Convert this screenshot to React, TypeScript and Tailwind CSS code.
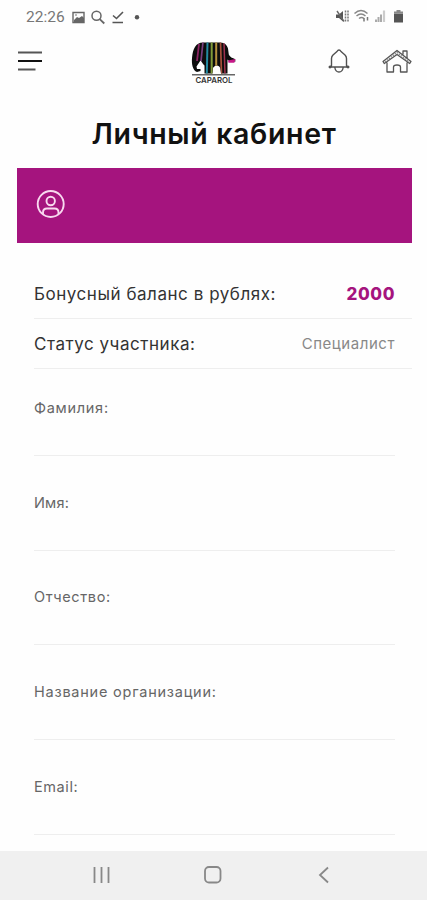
import React from "react";

const fields = [
  { label: "Фамилия:", box: "h-[87px]", text: "tracking-[0.72px]" },
  { label: "Имя:", box: "h-[95px]", text: "tracking-[0.2px]" },
  { label: "Отчество:", box: "h-[94px]", text: "tracking-[0.65px]" },
  { label: "Название организации:", box: "h-[95px]", text: "tracking-[0.77px]" },
  { label: "Email:", box: "h-[95px]", text: "tracking-[0.6px]" },
];

function StatusBar() {
  return (
    <div className="flex h-[34px] shrink-0 items-center justify-between pl-[26px] pr-[22px]">
      <div className="flex items-center">
        <span className="w-[46px] whitespace-nowrap font-[Roboto] text-[15.5px] leading-[18px] text-[#777]">22:26</span>
        <svg width="68" height="16" viewBox="0 0 68 16" fill="none">
          <path d="M1 3.500h11v10H1z" stroke="#666" strokeWidth="1.400" />
          <path d="M2 11l3-3 2 1 3-2 2 2v4H2z" fill="#666" />
          <path d="M3 6h2" stroke="#777" />
          <circle cx="24.500" cy="6.800" r="4.500" stroke="#666" strokeWidth="1.500" />
          <path d="M27.700 10.200l4.600 4.300" stroke="#666" strokeWidth="1.800" />
          <path d="M41 6.500l3.500 3L51 3M40.500 13.500H51" stroke="#555" strokeWidth="1.600" />
          <circle cx="65" cy="8.200" r="2.200" fill="#555" />
        </svg>
      </div>
      <svg width="70" height="16" viewBox="335 9 70 16" fill="none">
        <path d="M336 14.500h3l4-3.500v10.500l-4-3.500h-3z" fill="#555" />
        <path d="M337 11l7 10.500" stroke="#666" strokeWidth="1.400" />
        <path d="M345.500 10.500v12M348 10.500v12" stroke="#777" strokeWidth="1.500" strokeDasharray="2 1" />
        <path d="M354.500 13.500q6.500-6 13 0M356.500 16q4.500-4 9 0M359 18.500q2.500-2 5 0" stroke="#888" strokeWidth="1.500" />
        <path d="M364 18v3.500m3.500-4.500v3.500" stroke="#777" strokeWidth="1.500" />
        <path d="M376 22v-2.500m2.500 2.500v-5m2.500 5v-7.500" stroke="#aaa" strokeWidth="2" />
        <path d="M384 22V10.500" stroke="#ccc" strokeWidth="2.200" />
        <path d="M394 13.500h9v9h-9z" fill="#555" />
        <path d="M394 13.500v-2h2.500v-1.500h4v1.500h2.500v2z" fill="#888" />
      </svg>
    </div>
  );
}

function Logo() {
  return (
    <svg width="46" height="44" viewBox="191 41 46 44">
      <defs>
        <clipPath id="elephant">
          <path d="M203 42.500h17c5 .3 7 2.500 8 6l.8 6c2 3.500 4 3.500 6.200 4.500l.5 2.500h-4c-2 0-3-1-4-2V73.500h-6.500l-.8-5.500c-1-3.500-5.500-3.500-7.200 0l-.5 5.500H204.500v-8c-1.500-1-2.500-3.500-4-5l-4 6 .5 2.500h3.500v2l-3.500 1c-4.500-1.500-5.500-8.500-5-14 .8-9 3.500-15.500 11-15.500z" />
        </clipPath>
      </defs>
      <g clipPath="url(#elephant)">
        <path fill="#0d0d0d" d="M191 41h46v34h-46z" />
        <path d="M199 44l-2 17" stroke="#8c2463" strokeWidth="1.800" />
        <path d="M203 42l-2 19" stroke="#783e80" strokeWidth="1.700" />
        <path d="M207.500 42l-.7 32" stroke="#238aa2" strokeWidth="2" />
        <path d="M211.700 42v32" stroke="#809b39" strokeWidth="2" />
        <path d="M216.200 42v32" stroke="#b6923e" strokeWidth="2" />
        <path d="M220.500 42l1 32" stroke="#a6503b" strokeWidth="1.700" />
        <path d="M224 43l1 31" stroke="#9d304f" strokeWidth="1.500" />
      </g>
      <path d="M228 60.500l7.500-1.500-1.200 3.700h-5.800z" fill="#c51887" />
      <path d="M192 74.800h43" stroke="#666" strokeWidth="1.500" />
      <text x="195.500" y="83" fontFamily="Inter, sans-serif" fontSize="8" fontWeight="600" textLength="37" lengthAdjust="spacingAndGlyphs" fill="#333">CAPAROL</text>
    </svg>
  );
}

function Header() {
  return (
    <header className="flex h-[58px] shrink-0 items-start justify-between pl-[18px] pr-[15px] pt-[7px]">
      <button aria-label="Меню" className="mt-[9px]">
        <svg width="25" height="22" viewBox="0 0 25 22" fill="none">
          <path d="M0 2.500h24M0 19.500h17.500" stroke="#555" strokeWidth="1.800" />
          <path d="M0 11h24" stroke="#111" strokeWidth="2" />
        </svg>
      </button>
      <div className="ml-[57px]"><Logo /></div>
      <div className="mt-[7px] flex gap-[32px]">
        <svg width="22" height="26" viewBox="328 48 22 26" fill="none" stroke="#505050" strokeWidth="1.400" strokeLinejoin="round">
          <path d="M331.500 65.500v-7q0-2 1.500-3.500l4-3.500q.8-1.500 2-1.500t2 1.500l4 3.500q1.500 1.500 1.500 3.500v7l1 1.500h-17zM334.800 67.500q.8 4.500 4.200 4.500t4.200-4.500" />
          <circle cx="330" cy="67" r=".8" fill="#333" />
          <circle cx="348" cy="67" r=".8" fill="#333" />
        </svg>
        <svg width="30" height="26" viewBox="382 48 30 26" fill="none" stroke="#555" strokeWidth="1.300" strokeLinejoin="round">
          <path d="M383 61.500l14-11 14 11-1.300 2L397 54.500l-12.700 9zM403 54.500V51h4v7M387 62.500V72h6.500v-5q0-2 3.500-2t3.500 2v5h6.500v-9.500" />
          <path d="M385 62l12-9.500 12 9.500" stroke="#888" strokeDasharray="1.500 1" />
        </svg>
      </div>
    </header>
  );
}

export default function App() {
  return (
    <div className="flex h-[900px] w-[427px] flex-col overflow-hidden bg-[#fefefe] font-[Inter,'Noto_Sans',sans-serif]">
      <StatusBar />
      <Header />
      <h1 className="h-[76px] shrink-0 whitespace-nowrap pl-px pt-[24px] text-center text-[28.5px] font-semibold leading-[36px] text-[#111]">
        <span className="tracking-[0.65px]">Личный кабинет</span>
      </h1>
      <section className="ml-[17px] flex h-[75px] w-[395px] shrink-0 items-center bg-[#a5147e] pl-[19px]">
        <svg width="30" height="30" viewBox="0 0 30 30" fill="none" stroke="#f8d9ef" strokeWidth="1.900" className="mb-[3px]">
          <circle cx="14.700" cy="15" r="13" />
          <circle cx="14.700" cy="12" r="4.200" />
          <path d="M7 25v-1.500q0-4 4-4h7.500q4 0 4 4V25" />
        </svg>
      </section>
      <main className="flex min-h-0 flex-1 flex-col pl-[34px] pt-[26px]">
        <div className="flex h-[50px] w-[378px] shrink-0 items-center justify-between border-b border-[#eee] pr-[17px]">
          <span className="whitespace-nowrap text-[17px] leading-6 tracking-[0.54px] text-[#333]">Бонусный баланс в рублях:</span>
          <span className="text-[17px] font-extrabold leading-6 tracking-[0.6px] text-[#a5147e]">2000</span>
        </div>
        <div className="flex h-[50px] w-[378px] shrink-0 items-center justify-between border-b border-[#eee] pr-[17px]">
          <span className="whitespace-nowrap text-[17px] leading-6 tracking-[0.54px] text-[#333]">Статус участника:</span>
          <span className="text-[15px] leading-6 tracking-[0.55px] text-[#888]">Специалист</span>
        </div>
        {fields.map((field) => (
          <label key={field.label} className={`flex w-[361px] shrink-0 items-end border-b border-[#eee] pb-[37px] text-[14.5px] leading-5 text-[#666] ${field.box}`}>
            <span className={field.text}>{field.label}</span>
          </label>
        ))}
      </main>
      <nav className="flex h-[49px] shrink-0 items-center justify-between bg-[#f0f0f0] pb-[2px] pl-[92px] pr-[97px]">
        <svg width="20" height="20" viewBox="0 0 20 20" stroke="#888" strokeWidth="1.800"><path d="M2.500 2v16m7-16v16m7-16v16" /></svg>
        <svg width="20" height="20" viewBox="0 0 20 20" fill="none" stroke="#888" strokeWidth="1.800" className="mr-[4px]"><rect x="2" y="2" width="15.500" height="15.500" rx="4" /></svg>
        <svg width="12" height="20" viewBox="0 0 12 20" fill="none" stroke="#888" strokeWidth="1.800"><path d="M10 2.500L2 10l8 7.500" /></svg>
      </nav>
    </div>
  );
}
